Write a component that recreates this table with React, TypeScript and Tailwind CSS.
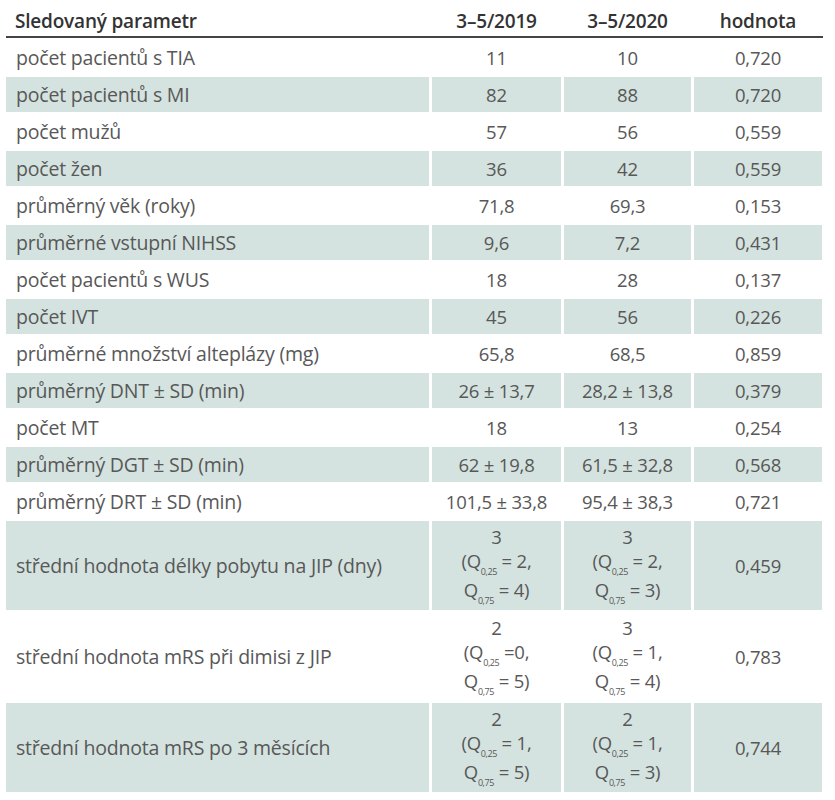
import React from "react";

const rows: [string, string, string, string][] = [
  ["počet pacientů s TIA", "11", "10", "0,720"],
  ["počet pacientů s MI", "82", "88", "0,720"],
  ["počet mužů", "57", "56", "0,559"],
  ["počet žen", "36", "42", "0,559"],
  ["průměrný věk (roky)", "71,8", "69,3", "0,153"],
  ["průměrné vstupní NIHSS", "9,6", "7,2", "0,431"],
  ["počet pacientů s WUS", "18", "28", "0,137"],
  ["počet IVT", "45", "56", "0,226"],
  ["průměrné množství alteplázy (mg)", "65,8", "68,5", "0,859"],
  ["průměrný DNT ± SD (min)", "26 ± 13,7", "28,2 ± 13,8", "0,379"],
  ["počet MT", "18", "13", "0,254"],
  ["průměrný DGT ± SD (min)", "62 ± 19,8", "61,5 ± 32,8", "0,568"],
  ["průměrný DRT ± SD (min)", "101,5 ± 33,8", "95,4 ± 38,3", "0,721"],
];

type Q = { m: string; a: string; b: string; eq1?: string };
const tall: { label: string; c2: Q; c3: Q; p: string }[] = [
  {
    label: "střední hodnota délky pobytu na JIP (dny)",
    c2: { m: "3", a: "2", b: "4" },
    c3: { m: "3", a: "2", b: "3" },
    p: "0,459",
  },
  {
    label: "střední hodnota mRS při dimisi z JIP",
    c2: { m: "2", a: "0", b: "5", eq1: "=" },
    c3: { m: "3", a: "1", b: "4" },
    p: "0,783",
  },
  {
    label: "střední hodnota mRS po 3 měsících",
    c2: { m: "2", a: "1", b: "5" },
    c3: { m: "2", a: "1", b: "3" },
    p: "0,744",
  },
];

const grid = "grid grid-cols-[423px_129px_127px_128px] gap-x-[3px]";

function Sub({ t }: { t: string }) {
  return <span className="relative top-[7px] text-[9px] tracking-[-0.4px]">{t}</span>;
}

function QCell({ q }: { q: Q }) {
  return (
    <div className="flex flex-col items-center leading-[24.5px]">
      <span>{q.m}</span>
      <span>
        (Q<Sub t="0,25" />
        {q.eq1 ? " =" : " = "}
        {q.a},
      </span>
      <span>
        Q<Sub t="0,75" /> = {q.b})
      </span>
    </div>
  );
}

export default function App() {
  return (
    <div
      className="bg-white w-[835px] h-[800px] text-[#585858] text-[18.5px] tracking-[-0.2px]"
      style={{ fontFamily: '"Open Sans", "Noto Sans", sans-serif' }}
    >
      <div className="pl-[6px] flex flex-col gap-y-[2px]">
        <div className={`${grid} w-[817px] h-[38px] border-b-2 border-[#444] items-end text-[#333] font-semibold pb-[1px] text-[19px]`}>
          <div className="pl-[9px]">Sledovaný parametr</div>
          <div className="text-center">3–5/2019</div>
          <div className="text-center">3–5/2020</div>
          <div className="text-center">hodnota</div>
        </div>
        {rows.map((r, i) => {
          const bg = i % 2 === 1 ? "bg-[#d4e3df]" : "bg-white";
          return (
            <div key={i} className={`${grid} h-[35px]`}>
              <div className={`${bg} flex items-center pl-[10px] text-[19.5px]`}>{r[0]}</div>
              <div className={`${bg} flex items-center justify-center`}>{r[1]}</div>
              <div className={`${bg} flex items-center justify-center`}>{r[2]}</div>
              <div className={`${bg} flex items-center justify-center`}>{r[3]}</div>
            </div>
          );
        })}
        {tall.map((r, i) => {
          const bg = i % 2 === 0 ? "bg-[#d4e3df]" : "bg-white";
          return (
            <div key={i} className={`${grid} h-[89px]`}>
              <div className={`${bg} flex items-center pl-[10px] text-[19.5px]`}>{r.label}</div>
              <div className={`${bg} flex items-center justify-center`}>
                <QCell q={r.c2} />
              </div>
              <div className={`${bg} flex items-center justify-center`}>
                <QCell q={r.c3} />
              </div>
              <div className={`${bg} flex items-center justify-center`}>{r.p}</div>
            </div>
          );
        })}
      </div>
    </div>
  );
}
